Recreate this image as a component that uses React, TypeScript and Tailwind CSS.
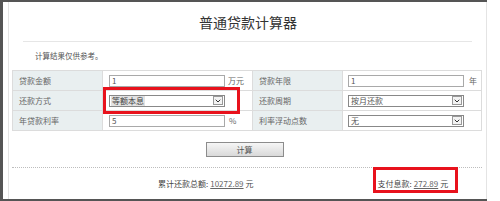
import { ChevronDown } from 'lucide-react'

function TextBox({ value, width = 'w-[116px]' }: { value: string; width?: string }) {
  return (
    <div className={`${width} h-[12px] border border-[#a9a9a9] bg-white flex items-center pl-[2px] text-[8px] leading-none text-[#555]`}>
      {value}
    </div>
  )
}

function SelectBox({ value, highlight }: { value: string; highlight?: boolean }) {
  return (
    <div className="w-[116px] h-[12px] border border-[#888] bg-white flex items-center justify-between pl-[1px] pr-[1px]">
      <span
        className={
          highlight
            ? 'text-[8px] leading-none text-[#444] bg-[#e2e2e2] px-[1px] py-[1px]'
            : 'text-[8px] leading-none text-[#555] pl-[1px]'
        }
      >
        {value}
      </span>
      <span className="w-[10px] h-[9px] border border-[#999] bg-[#f3f3f3] flex items-center justify-center">
        <ChevronDown size={8} strokeWidth={3} className="text-[#333]" />
      </span>
    </div>
  )
}

const label = 'w-[90px] bg-[#e9eff0] border border-[#dcdcdc] pl-[6px] text-[8px] text-[#666] align-middle'
const cell = 'border border-[#dcdcdc] align-middle'

export default function App() {
  return (
    <div className="w-[500px] h-[201px] bg-white overflow-hidden font-['Noto_Sans_CJK_SC',sans-serif]">
      <div className="w-[487px] h-[201px] border-l-[3px] border-t-2 border-b-2 border-[#555] pl-[5px]">
        <div className="w-[479px] h-full border-x border-[#e4e4e4] flex flex-col">
          {/* title */}
          <div className="h-[39px] flex items-center justify-center text-[14px] leading-none text-[#333] pl-[1px]">
            普通贷款计算器
          </div>
          <div className="ml-[14px] w-[449px] h-px bg-[#e6e6e6]" />

          <div className="h-[28px] flex items-center pl-[26px] text-[7.5px] text-[#555]">
            计算结果仅供参考。
          </div>

          {/* form */}
          <table className="ml-[3px] w-[469px] border-collapse table-fixed">
            <colgroup>
              <col className="w-[90px]" />
              <col className="w-[150px]" />
              <col className="w-[90px]" />
              <col className="w-[139px]" />
            </colgroup>
            <tbody>
              <tr className="h-[20px]">
                <td className={label}>贷款金额</td>
                <td className={cell}>
                  <div className="flex items-center gap-[3px] pl-[6px]">
                    <TextBox value="1" />
                    <span className="text-[8px] text-[#666]">万元</span>
                  </div>
                </td>
                <td className={label}>贷款年限</td>
                <td className={cell}>
                  <div className="flex items-center gap-[5px] pl-[5px]">
                    <TextBox value="1" />
                    <span className="text-[8px] text-[#666]">年</span>
                  </div>
                </td>
              </tr>
              <tr className="h-[20px]">
                <td className={label}>还款方式</td>
                <td className={cell}>
                  <div className="relative flex items-center pl-[6px]">
                    <SelectBox value="等额本息" highlight />
                    <div className="absolute left-0 top-[-8px] w-[137px] h-[27px] border-[3px] border-[#e8121c]" />
                  </div>
                </td>
                <td className={label}>还款周期</td>
                <td className={cell}>
                  <div className="flex items-center pl-[5px]">
                    <SelectBox value="按月还款" />
                  </div>
                </td>
              </tr>
              <tr className="h-[20px]">
                <td className={label}>年贷款利率</td>
                <td className={cell}>
                  <div className="flex items-center gap-[4px] pl-[6px]">
                    <TextBox value="5" />
                    <span className="text-[8px] text-[#666]">%</span>
                  </div>
                </td>
                <td className={label}>利率浮动点数</td>
                <td className={cell}>
                  <div className="flex items-center pl-[5px]">
                    <SelectBox value="无" />
                  </div>
                </td>
              </tr>
            </tbody>
          </table>

          {/* button */}
          <div className="h-[36px] flex items-center justify-center pr-[6px] pt-[1px]">
            <button className="w-[78px] h-[15px] border border-[#8c8c8c] bg-gradient-to-b from-[#f6f6f6] to-[#d9d9d9] text-[8px] leading-none text-[#555]">
              计算
            </button>
          </div>

          <div className="ml-[3px] w-[470px] border-t border-dotted border-[#bdbdbd]" />

          {/* result */}
          <div className="flex-1 flex items-center text-[8px] text-[#444] pt-[1px]">
            <div className="ml-[149px] flex items-center">
              累计还款总额:
              <span className="ml-[2px] underline text-[#666]">10272.89</span>
              <span className="ml-[2px]">元</span>
            </div>
            <div className="relative ml-[124px] flex items-center">
              支付息款:
              <span className="ml-[2px] underline text-[#666]">272.89</span>
              <span className="ml-[2px]">元</span>
              <div className="absolute left-[-5px] top-[-11px] w-[85px] h-[26px] border-[3px] border-[#e8121c]" />
            </div>
          </div>
        </div>
      </div>
    </div>
  )
}
